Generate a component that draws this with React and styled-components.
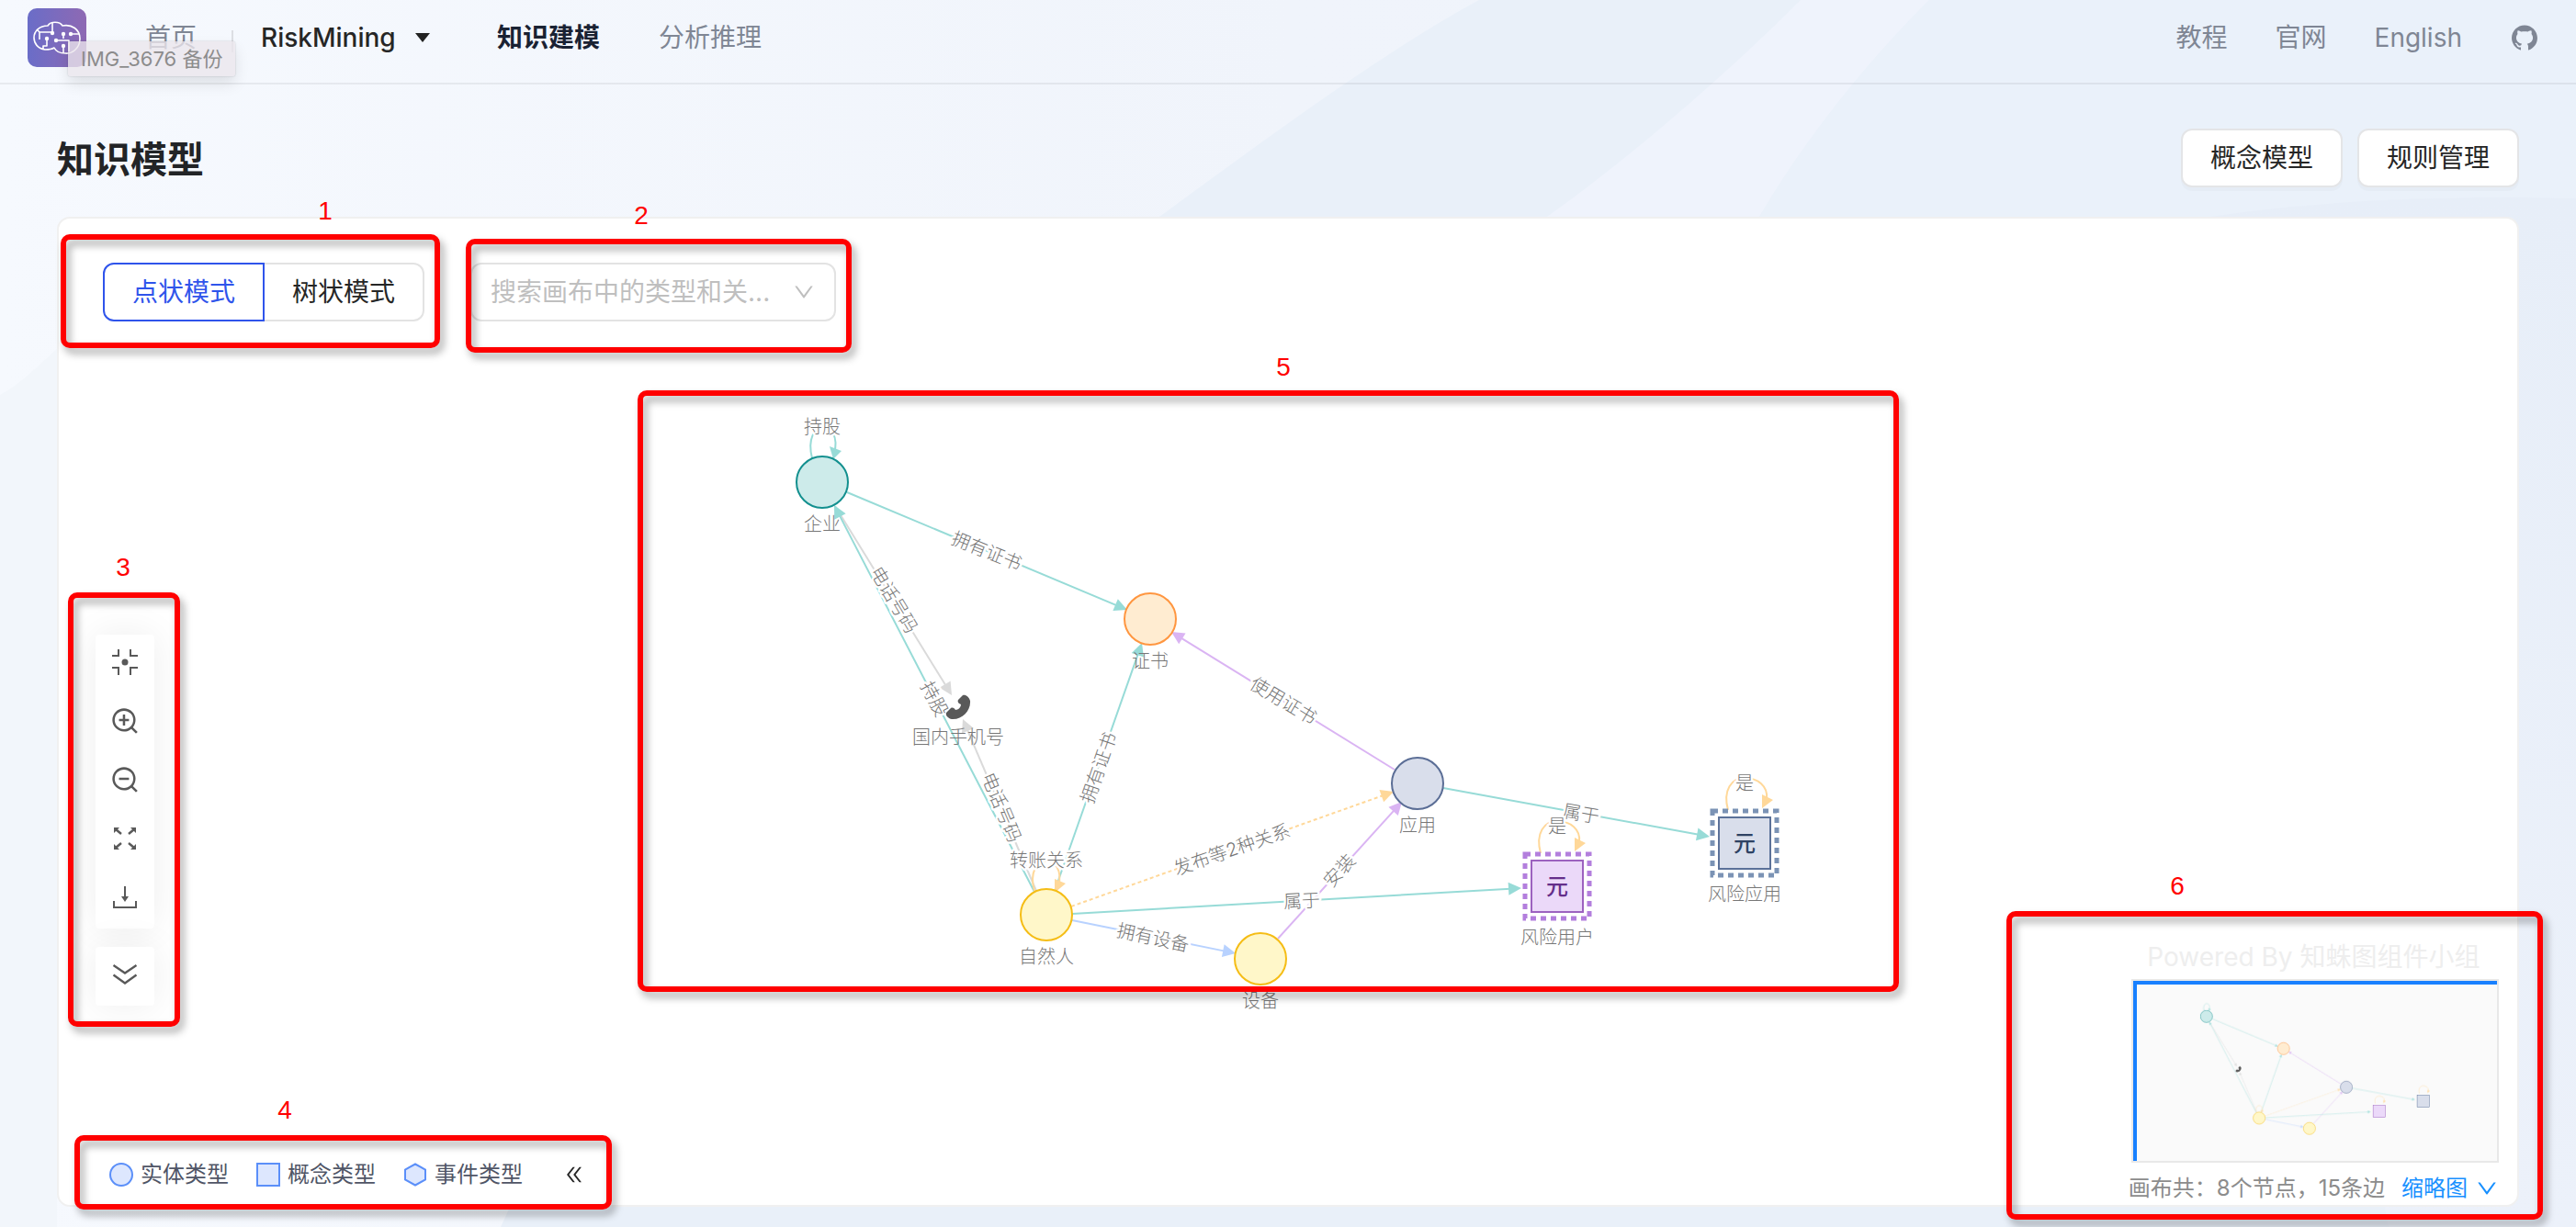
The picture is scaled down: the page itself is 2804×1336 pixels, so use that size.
import React from "react";
import styled, { createGlobalStyle, css } from "styled-components";
import {
  AiOutlineDown,
  AiOutlineDoubleLeft,
  AiOutlineGithub,
  AiOutlineZoomIn,
  AiOutlineZoomOut,
} from "react-icons/ai";

const uiFont = `Inter, "Noto Sans CJK SC", sans-serif`;

const GlobalStyle = createGlobalStyle`
  *, *::before, *::after { box-sizing: border-box; }
  body { margin: 0; background: #edf2fa; }
  button, select { font: inherit; color: inherit; }
  body, svg text { font-family: ${uiFont}; }
`;

/* ---------- page frame ---------- */

const Page = styled.div`
  position: relative;
  display: flex;
  flex-direction: column;
  min-height: 100vh;
  font-size: 28px;
  line-height: 40px;
  color: #262626;
  isolation: isolate;
`;

const Backdrop = styled.svg`
  position: absolute;
  inset: 0;
  width: 100%;
  height: 100%;
  z-index: -1;
`;

const Header = styled.header`
  display: flex;
  align-items: center;
  padding: 0 40px 8px 30px;
  height: 92px;
  border-bottom: 2px solid rgba(0, 0, 0, 0.06);
`;

const LogoWrap = styled.div`
  position: relative;
  z-index: 1;
  display: flex;
  margin-right: 64px;
`;

const DragLabel = styled.span`
  position: absolute;
  left: 44px;
  top: 36px;
  padding: 0 14px;
  font-size: 22px;
  line-height: 38px;
  white-space: nowrap;
  color: #8c8c8c;
  background: rgba(235, 229, 236, 0.78);
  border-radius: 3px;
  box-shadow: 0 0 2px rgba(0, 0, 0, 0.2), 0 8px 16px rgba(0, 0, 0, 0.1);
`;

const NavLink = styled.a`
  color: ${(p) => (p.$active ? "#1a2233" : "#7f8694")};
  font-weight: ${(p) => (p.$active ? 700 : 400)};
  text-decoration: none;
`;

const Divider = styled.span`
  width: 2px;
  height: 24px;
  margin: 8px 30px 0 38px;
  align-self: center;
  background: #dcdee3;
`;

const MainNav = styled.nav`
  display: flex;
  gap: 64px;
  margin-left: 72px;
`;

const SideNav = styled.nav`
  display: flex;
  align-items: center;
  gap: 52px;
  margin-left: auto;

  svg {
    display: block;
  }
`;

const SelectFrame = styled.label`
  display: inline-grid;
  align-items: center;

  > * {
    grid-area: 1 / 1;
  }

  > svg {
    justify-self: end;
    pointer-events: none;
  }
`;

const bareSelect = css`
  appearance: none;
  border: 0;
  background: transparent;
  outline: none;
`;

const ProjectSelect = styled.select`
  ${bareSelect}
  padding: 0 38px 0 0;
  font-weight: 500;
  line-height: 40px;
`;

const TitleRow = styled.div`
  display: flex;
  align-items: center;
  justify-content: space-between;
  padding: 48px 62px 32px;
`;

const Title = styled.h1`
  margin: 0;
  padding-top: 4px;
  font-size: 40px;
  line-height: 56px;
  font-weight: 700;
  color: #222426;
`;

const Actions = styled.div`
  display: flex;
  gap: 16px;
`;

const ActionButton = styled.button`
  height: 64px;
  padding: 0 30px;
  line-height: 40px;
  background: #fff;
  border: 2px solid #e4e5e7;
  border-radius: 12px;
  box-shadow: 0 4px 0 rgba(0, 0, 0, 0.02);
`;

/* ---------- canvas card ---------- */

const Card = styled.main`
  position: relative;
  flex: 1;
  display: flex;
  flex-direction: column;
  margin: 0 62px 22px;
  background: #fff;
  border: 2px solid #f0f0f0;
  border-radius: 14px;
`;

const TopBar = styled.div`
  position: relative;
  display: flex;
  gap: 50px;
  padding: 48px 48px 0;
`;

const Segmented = styled.div`
  display: flex;
`;

const SegmentButton = styled.button`
  height: 64px;
  padding: 0 30px;
  line-height: 40px;
  background: #fff;
  border: 2px solid ${(p) => (p.$active ? "#2f54eb" : "#e3e3e3")};
  border-radius: ${(p) => (p.$active ? "12px 0 0 12px" : "0 12px 12px 0")};
  color: ${(p) => (p.$active ? "#2f54eb" : "#262626")};

  & + & {
    border-left: 0;
  }
`;

const SearchFrame = styled(SelectFrame)`
  width: 398px;
  height: 64px;
  padding: 0 20px;
  border: 2px solid #e3e3e3;
  border-radius: 12px;
  color: #bfbfbf;
`;

const SearchSelect = styled.select`
  ${bareSelect}
  width: 100%;
  padding: 0;
  line-height: 40px;
`;

const GraphLayer = styled.svg`
  position: absolute;
  inset: 0;
  width: 100%;
  height: 100%;
  overflow: visible;
`;

const BottomArea = styled.div`
  position: relative;
  display: flex;
  align-items: flex-end;
  justify-content: space-between;
  margin-top: auto;
  pointer-events: none;
`;

const LeftColumn = styled.div`
  display: flex;
  flex-direction: column;
  align-items: flex-start;
  gap: 167px;
  padding: 0 0 16px 40px;
`;

const Tools = styled.div`
  display: flex;
  flex-direction: column;
  gap: 20px;
`;

const ToolGroup = styled.div`
  display: flex;
  flex-direction: column;
  border-radius: 4px;
  background: #fff;
  box-shadow: 0 0 40px rgba(0, 0, 0, 0.07);
`;

const ToolButton = styled.button`
  display: flex;
  align-items: center;
  justify-content: center;
  width: 64px;
  height: 64px;
  padding: 0 0 4px;
  border: 0;
  background: none;
  color: #595959;
  pointer-events: auto;
`;

const Legend = styled.ul`
  display: flex;
  align-items: center;
  gap: 30px;
  margin: 0;
  padding: 0 0 0 15px;
  list-style: none;
  font-size: 24px;
  line-height: 34px;
  color: #4f5566;
`;

const LegendItem = styled.li`
  display: flex;
  align-items: center;
  gap: 8px;
`;

const LegendToggle = styled.button`
  display: flex;
  margin-left: 14px;
  padding: 0;
  border: 0;
  background: none;
  color: #262626;
  pointer-events: auto;
`;

const Overview = styled.section`
  display: flex;
  flex-direction: column;
  align-items: flex-end;
  padding: 0 20px 4px 0;
`;

const Watermark = styled.div`
  align-self: center;
  margin-bottom: 6px;
  line-height: 36px;
  color: #eeeeee;
`;

const MiniMap = styled.div`
  width: 400px;
  height: 200px;
  border: 2px solid #e8e8e8;
  background: #fafafa;
`;

const Viewport = styled.div`
  height: 100%;
  border: solid #1880ff;
  border-width: 4px 0 0 4px;
  overflow: hidden;

  svg {
    display: block;
  }
`;

const Stats = styled.div`
  display: flex;
  align-items: center;
  gap: 18px;
  margin-top: 14px;
  font-size: 24px;
  line-height: 28px;
  color: #8c8c8c;
`;

const StatsToggle = styled.button`
  display: flex;
  align-items: center;
  gap: 8px;
  padding: 0;
  border: 0;
  background: none;
  color: #1890ff;
  line-height: 28px;
  pointer-events: auto;
`;

/* ---------- numbered callouts ---------- */

const CalloutBox = styled.div`
  position: absolute;
  top: ${(p) => p.$top}px;
  ${(p) => (p.$right === undefined ? `left: ${p.$left}px;` : `right: ${p.$right}px;`)}
  width: ${(p) => p.$width}px;
  height: ${(p) => p.$height}px;
  border: 6px solid #ff0000;
  border-radius: 10px;
  filter: drop-shadow(4px 6px 4px rgba(0, 0, 0, 0.35));
  pointer-events: none;
`;

const CalloutNumber = styled.span`
  position: absolute;
  top: ${(p) => p.$top}px;
  ${(p) => (p.$right === undefined ? `left: ${p.$left}px;` : `right: ${p.$right}px;`)}
  width: 32px;
  text-align: center;
  font-family: "Liberation Sans", Arial, sans-serif;
  font-size: 28px;
  line-height: 32px;
  color: #ff0000;
  pointer-events: none;
`;

const callouts = [
  { n: 1, box: { top: 17, left: 2, width: 413, height: 124 }, num: { top: -24, left: 274 } },
  { n: 2, box: { top: 22, left: 443, width: 420, height: 124 }, num: { top: -19, left: 618 } },
  { n: 3, box: { top: 407, left: 10, width: 122, height: 473 }, num: { top: 364, left: 54 } },
  { n: 4, box: { top: 998, left: 17, width: 585, height: 81 }, num: { top: 955, left: 230 } },
  { n: 5, box: { top: 187, left: 630, width: 1373, height: 655 }, num: { top: 146, left: 1317 } },
  { n: 6, box: { top: 754, right: -28, width: 584, height: 336 }, num: { top: 711, right: 354 } },
];

/* ---------- graph ---------- */

const teal = "#97dbd7";
const gray = "#dadada";
const purple = "#dab4f3";
const orange = "#ffd899";
const blue = "#b8d2ff";

const circles = [
  { x: 895, y: 525, fill: "#cdebea", stroke: "#13908f", name: "企业" },
  { x: 1252, y: 674, fill: "#ffecd1", stroke: "#ff9640", name: "证书" },
  { x: 1543, y: 853, fill: "#d9deeb", stroke: "#5b6e96", name: "应用" },
  { x: 1139, y: 996, fill: "#fff7c9", stroke: "#f5bd16", name: "自然人" },
  { x: 1372, y: 1044, fill: "#fff7c9", stroke: "#f5bd16", name: "设备" },
];

const squares = [
  { x: 1695, y: 965, fill: "#ebd9f9", stroke: "#9c62bf", dash: "#b37fdd", ink: "#642e8a", name: "风险用户" },
  { x: 1899, y: 918, fill: "#d9deeb", stroke: "#5b7199", dash: "#7b93b5", ink: "#2e4263", name: "风险应用" },
];

const edges = [
  { from: [909, 551], to: [1036, 757], color: gray },
  { from: [1128, 970], to: [1048, 783], color: gray },
  { from: [1126, 971], to: [908, 550], color: teal },
  { from: [922, 536], to: [1227, 664], color: teal },
  { from: [1148, 970], to: [1243, 700], color: teal },
  { from: [1518, 838], to: [1275, 688], color: purple },
  { from: [1166, 987], to: [1517, 862], color: orange, dashed: true },
  { from: [1391, 1022], to: [1526, 873], color: purple },
  { from: [1167, 995], to: [1656, 967], color: teal },
  { from: [1167, 1002], to: [1345, 1038], color: blue },
  { from: [1571, 858], to: [1861, 911], color: teal },
];

const edgeLabels = [
  [1074, 600, 22, "拥有证书"],
  [973, 653, 59, "电话号码"],
  [1017, 761, 62, "持股"],
  [1090, 879, 67, "电话号码"],
  [1196, 836, -71, "拥有证书"],
  [1397, 763, 31, "使用证书"],
  [1341, 925, -19, "发布等2种关系"],
  [1458, 948, -48, "安装"],
  [1417, 981, -3, "属于"],
  [1255, 1021, 12, "拥有设备"],
  [1721, 886, 10, "属于"],
  [895, 465, 0, "持股"],
  [1139, 937, 0, "转账关系"],
  [1695, 900, 0, "是"],
  [1899, 853, 0, "是"],
];

const GraphText = styled.text`
  font-size: ${(p) => p.$size || 20}px;
  font-weight: ${(p) => p.$weight || 300};
  fill: ${(p) => p.$ink || "#777"};
  text-anchor: middle;
  dominant-baseline: central;
  ${(p) => p.$halo && "stroke: #fff; stroke-width: 5px; stroke-linejoin: round; paint-order: stroke;"}
`;

function Edge({ from, to, color, dashed }) {
  const [x1, y1] = from;
  const [x2, y2] = to;
  const angle = (Math.atan2(y2 - y1, x2 - x1) * 180) / Math.PI;
  const length = Math.hypot(x2 - x1, y2 - y1);
  return (
    <g transform={`translate(${x1} ${y1}) rotate(${angle})`}>
      <line x2={length - 12} stroke={color} strokeWidth="2" strokeDasharray={dashed ? "4 3" : undefined} />
      <path d={`M${length} 0l-14 -7v14z`} fill={color} />
    </g>
  );
}

function Graph({ mini }) {
  return (
    <>
      <g opacity={mini ? 0.8 : 1}>
        {edges.map((edge, i) => (
          <Edge key={i} {...edge} />
        ))}
        <path d="M884 499C873 455 918 455 908 494" fill="none" stroke={teal} strokeWidth="2" />
        <path d="M907 500l-4 -14 13 5z" fill={teal} />
        <path d="M1126 970C1114 928 1162 928 1152 965" fill="none" stroke={orange} strokeWidth="2" />
        <path d="M1148 972v-15l12 5z" fill={orange} />
        {squares.map((s) => (
          <g key={s.name} transform={`translate(${s.x} ${s.y})`}>
            <path d="M-18 -36C-24 -58 -14 -71 0 -71S26 -62 24 -48" fill="none" stroke={orange} strokeWidth="2" />
            <path d="M19 -53l12 6 -12 9z" fill={orange} />
          </g>
        ))}
      </g>
      {!mini &&
        edgeLabels.map(([x, y, angle, text], i) => (
          <GraphText key={i} $halo transform={`translate(${x} ${y}) rotate(${angle})`}>
            {text}
          </GraphText>
        ))}
      {circles.map((c) => (
        <circle key={c.name} cx={c.x} cy={c.y} r="28" fill={c.fill} stroke={c.stroke} strokeWidth="2" />
      ))}
      {squares.map((s) => (
        <g key={s.name} transform={`translate(${s.x} ${s.y})`}>
          <rect x="-28" y="-28" width="56" height="56" fill={s.fill} stroke={s.stroke} strokeWidth="2" />
          {!mini && (
            <>
              <rect x="-35" y="-35" width="70" height="70" fill="none" stroke={s.dash} strokeWidth="5" strokeDasharray="6 5" />
              <GraphText $size={24} $weight={500} $ink={s.ink}>
                元
              </GraphText>
            </>
          )}
        </g>
      ))}
      <path
        transform="translate(1043 770)"
        fill="#595959"
        d="M5 -13C8 -14 12 -11 13 -7C14 4 4 14 -7 13C-11 12 -14 9 -13 6L-8 1C-6 0 -4 1 -3 3C0 3 3 0 3 -3C0 -4 -1 -6 0 -8Z"
      />
      {!mini && (
        <>
          {circles.map((c) => (
            <GraphText key={c.name} x={c.x} y={c.y + 46}>
              {c.name}
            </GraphText>
          ))}
          {squares.map((s) => (
            <GraphText key={s.name} x={s.x} y={s.y + 56}>
              {s.name}
            </GraphText>
          ))}
          <GraphText x="1043" y="803">国内手机号</GraphText>
        </>
      )}
    </>
  );
}

/* ---------- drawings ---------- */

function Scenery() {
  return (
    <Backdrop viewBox="0 0 2804 1336" preserveAspectRatio="none" aria-hidden="true">
      <defs>
        <linearGradient id="sky" x1="0" x2="1" y1="0" y2="0">
          <stop offset="0" stopColor="#f6f9fe" />
          <stop offset="0.5" stopColor="#f0f4fb" />
          <stop offset="1" stopColor="#eff3fb" />
        </linearGradient>
        <linearGradient id="hill" x1="0" x2="0" y1="0" y2="1">
          <stop offset="0" stopColor="#e7eef8" />
          <stop offset="1" stopColor="#ecf1fa" />
        </linearGradient>
      </defs>
      <rect width="2804" height="1336" fill="url(#sky)" />
      <path d="M0 430C20 420 40 400 62 380V1336H0Z" fill="#f2f6fb" />
      <path d="M1610 0C1500 60 1380 150 1262 236C1000 500 700 1000 545 1336H2804V0Z" fill="#e9f0f9" />
      <path d="M1960 0C1890 70 1790 160 1684 236L1915 236C1960 160 2020 80 2100 0Z" fill="#eff3fc" />
      <path d="M2100 0C2020 80 1960 160 1915 236H2804V0Z" fill="#eaf1fa" />
      <path d="M2380 240C2500 220 2640 212 2804 216V1336H2600Z" fill="url(#hill)" />
    </Backdrop>
  );
}

function Logo() {
  return (
    <svg width="64" height="64" viewBox="0 0 64 64" role="img" aria-label="logo">
      <defs>
        <linearGradient id="logoFill" x1="0" x2="1" y1="0" y2="0">
          <stop offset="0" stopColor="#6a6dc8" />
          <stop offset="1" stopColor="#8e69b3" />
        </linearGradient>
      </defs>
      <rect width="64" height="64" rx="10" fill="url(#logoFill)" />
      <g fill="none" stroke="#fff" strokeWidth="1.6" strokeLinejoin="round">
        <path d="M22 19C25 14 35 14 38 19C48 17 57 23 57 33C57 44 48 50 41 49C35 49 31 47 29 43C26 45 22 45 19 45C11 44 7 38 7 32C7 25 13 19 22 19Z" />
        <path d="M27 15V26H13V34M21 33V41H17V45M39 28V33M47 28H56M31 35H45V47M39 41V49M13 26L10 23" />
      </g>
      <g fill="#fff">
        <circle cx="27" cy="27" r="2.2" />
        <circle cx="21" cy="33" r="2.2" />
        <circle cx="39" cy="28" r="2.2" />
        <circle cx="47" cy="28" r="2.2" />
        <circle cx="31" cy="35" r="2.2" />
        <circle cx="39" cy="41" r="2.2" />
      </g>
    </svg>
  );
}

const Stroke = (props) => (
  <svg width="28" height="28" viewBox="0 0 28 28" fill="none" stroke="currentColor" strokeWidth="2" {...props} />
);

const CenterIcon = () => (
  <Stroke>
    <path d="M0 7H7V0M20 0V7H28M0 20H7V28M20 28V20H28" />
    <circle cx="14" cy="14" r="3.5" fill="currentColor" stroke="none" />
  </Stroke>
);

const ExpandIcon = () => (
  <Stroke>
    <path d="M4 4L10 9M24 4L18 9M4 24L10 19M24 24L18 19" strokeWidth="2.4" />
    <path d="M2 2h6L2 8zM26 2h-6L26 8zM2 26h6L2 20zM26 26h-6L26 20z" fill="currentColor" stroke="none" />
  </Stroke>
);

const DownloadIcon = () => (
  <Stroke>
    <path d="M14 2V15M2 18V25H26V18" />
    <path d="M10 13H18L14 19Z" fill="currentColor" stroke="none" />
  </Stroke>
);

const DoubleDownIcon = () => (
  <Stroke>
    <path d="M1.5 4L14 12.5L26.5 4M1.5 14.5L14 23.5L26.5 14.5" strokeWidth="2.3" />
  </Stroke>
);

const LegendShape = ({ children }) => (
  <svg width="26" height="26" viewBox="0 0 26 26" fill="#dde7fe" stroke="#5b8ff9" strokeWidth="2">
    {children}
  </svg>
);

export default function App() {
  return (
    <Page lang="zh-CN">
      <GlobalStyle />
      <Scenery />
      <Header>
        <LogoWrap>
          <Logo />
          <DragLabel>IMG_3676 备份</DragLabel>
        </LogoWrap>
        <NavLink href="#home">首页</NavLink>
        <Divider />
        <SelectFrame>
          <ProjectSelect aria-label="RiskMining">
            <option>RiskMining</option>
          </ProjectSelect>
          <svg width="18" height="12" viewBox="0 0 18 12" fill="#222">
            <path d="M1 1H17L9 11Z" />
          </svg>
        </SelectFrame>
        <MainNav>
          <NavLink href="#modeling" $active>知识建模</NavLink>
          <NavLink href="#analysis">分析推理</NavLink>
        </MainNav>
        <SideNav>
          <NavLink href="#tutorial">教程</NavLink>
          <NavLink href="#site">官网</NavLink>
          <NavLink href="#english">English</NavLink>
          <NavLink href="#github" aria-label="GitHub">
            <AiOutlineGithub size={32} />
          </NavLink>
        </SideNav>
      </Header>

      <TitleRow>
        <Title>知识模型</Title>
        <Actions>
          <ActionButton type="button">概念模型</ActionButton>
          <ActionButton type="button">规则管理</ActionButton>
        </Actions>
      </TitleRow>

      <Card>
        <GraphLayer>
          <g transform="translate(-64 -238)">
            <Graph />
          </g>
        </GraphLayer>

        <TopBar>
          <Segmented>
            <SegmentButton type="button" $active aria-pressed="true">点状模式</SegmentButton>
            <SegmentButton type="button" aria-pressed="false">树状模式</SegmentButton>
          </Segmented>
          <SearchFrame>
            <SearchSelect aria-label="搜索画布中的类型和关...">
              <option>搜索画布中的类型和关...</option>
            </SearchSelect>
            <AiOutlineDown size={26} />
          </SearchFrame>
        </TopBar>

        <BottomArea>
          <LeftColumn>
            <Tools>
              <ToolGroup>
                <ToolButton type="button" aria-label="居中"><CenterIcon /></ToolButton>
                <ToolButton type="button" aria-label="放大"><AiOutlineZoomIn size={34} /></ToolButton>
                <ToolButton type="button" aria-label="缩小"><AiOutlineZoomOut size={34} /></ToolButton>
                <ToolButton type="button" aria-label="全屏"><ExpandIcon /></ToolButton>
                <ToolButton type="button" aria-label="下载"><DownloadIcon /></ToolButton>
              </ToolGroup>
              <ToolGroup>
                <ToolButton type="button" aria-label="收起"><DoubleDownIcon /></ToolButton>
              </ToolGroup>
            </Tools>
            <Legend>
              <LegendItem>
                <LegendShape><circle cx="13" cy="13" r="12" /></LegendShape>
                实体类型
              </LegendItem>
              <LegendItem>
                <LegendShape><rect x="1" y="1" width="24" height="24" /></LegendShape>
                概念类型
              </LegendItem>
              <LegendItem>
                <LegendShape><path d="M13 1.5L24 7.5V18.5L13 24.5L2 18.5V7.5Z" /></LegendShape>
                事件类型
              </LegendItem>
              <LegendItem>
                <LegendToggle type="button" aria-label="收起图例"><AiOutlineDoubleLeft size={24} /></LegendToggle>
              </LegendItem>
            </Legend>
          </LeftColumn>

          <Overview>
            <Watermark>Powered By 知蛛图组件小组</Watermark>
            <MiniMap>
              <Viewport>
                <svg width="392" height="192" aria-hidden="true">
                  <g transform="translate(-134.6 -88.7) scale(0.235)">
                    <Graph mini />
                  </g>
                </svg>
              </Viewport>
            </MiniMap>
            <Stats>
              <span>画布共：8个节点，15条边</span>
              <StatsToggle type="button">
                缩略图
                <AiOutlineDown size={26} />
              </StatsToggle>
            </Stats>
          </Overview>
        </BottomArea>

        {callouts.map(({ n, box, num }) => (
          <React.Fragment key={n}>
            <CalloutNumber $top={num.top} $left={num.left} $right={num.right}>{n}</CalloutNumber>
            <CalloutBox
              $top={box.top}
              $left={box.left}
              $right={box.right}
              $width={box.width}
              $height={box.height}
            />
          </React.Fragment>
        ))}
      </Card>
    </Page>
  );
}
